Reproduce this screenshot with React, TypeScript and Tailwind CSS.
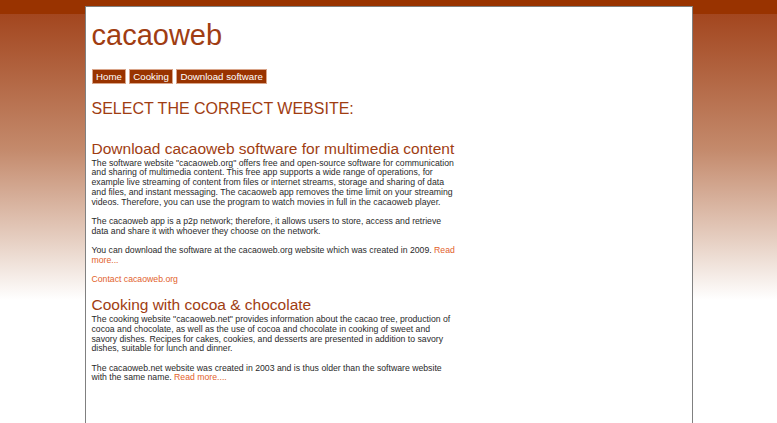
const FONT = { fontFamily: '"Liberation Sans", Arial, sans-serif' };

const NAV = ["Home", "Cooking", "Download software"];

export default function App() {
  return (
    <div
      className="min-h-screen bg-[linear-gradient(#993300_0px,#993300_14px,#a3461f_14px,#c48a6c_150px,#e6cfc2_240px,#ffffff_300px)]"
      style={FONT}
    >
      <div className="w-[608px] mx-auto pt-[6px]">
        <div className="bg-white border border-b-0 border-[#808080] min-h-[417px] px-[6px]">
          <div className="w-[366px]">
            {/* Header */}
            <h1 className="mt-[12px] text-[29px] leading-[33px] text-[#a03d12]">
              cacaoweb
            </h1>

            {/* Menu */}
            <nav className="flex gap-[2.5px] mt-[17px]">
              {NAV.map((item) => (
                <a
                  key={item}
                  href="#"
                  className="h-[15px] px-[3.5px] flex items-center bg-[#993300] border border-[#d9a58a] text-white text-[9.7px] leading-none"
                >
                  {item}
                </a>
              ))}
            </nav>

            <h3 className="mt-[16px] text-[16px] leading-[18.5px] text-[#a03d12]">
              SELECT THE CORRECT WEBSITE:
            </h3>

            {/* Software */}
            <h2 className="mt-[21px] text-[15.5px] leading-[18px] text-[#a03d12] whitespace-nowrap">
              Download cacaoweb software for multimedia content
            </h2>
            <div className="mt-[1px] text-[8.7px] leading-[9.8px] text-[#2a2a2a] space-y-[9.5px]">
              <p>
                The software website "cacaoweb.org" offers free and open-source software for
                communication and sharing of multimedia content. This free app supports a wide range
                of operations, for example live streaming of content from files or internet streams,
                storage and sharing of data and files, and instant messaging. The cacaoweb app
                removes the time limit on your streaming videos. Therefore, you can use the program
                to watch movies in full in the cacaoweb player.
              </p>
              <p>
                The cacaoweb app is a p2p network; therefore, it allows users to store, access and
                retrieve data and share it with whoever they choose on the network.
              </p>
              <p>
                You can download the software at the cacaoweb.org website which was created in
                2009. <a href="#" className="text-[#e2622c]">Read more...</a>
              </p>
              <p>
                <a href="#" className="text-[#e2622c]">Contact cacaoweb.org</a>
              </p>
            </div>

            {/* Cooking */}
            <h2 className="mt-[11px] text-[15.5px] leading-[18px] text-[#a03d12]">
              Cooking with cocoa &amp; chocolate
            </h2>
            <div className="mt-[1px] text-[8.7px] leading-[9.8px] text-[#2a2a2a] space-y-[9.5px]">
              <p>
                The cooking website "cacaoweb.net" provides information about the cacao tree,
                production of cocoa and chocolate, as well as the use of cocoa and chocolate in
                cooking of sweet and savory dishes. Recipes for cakes, cookies, and desserts are
                presented in addition to savory dishes, suitable for lunch and dinner.
              </p>
              <p>
                The cacaoweb.net website was created in 2003 and is thus older than the software
                website with the same name. <a href="#" className="text-[#e2622c]">Read more....</a>
              </p>
            </div>
          </div>
        </div>
      </div>
    </div>
  );
}
